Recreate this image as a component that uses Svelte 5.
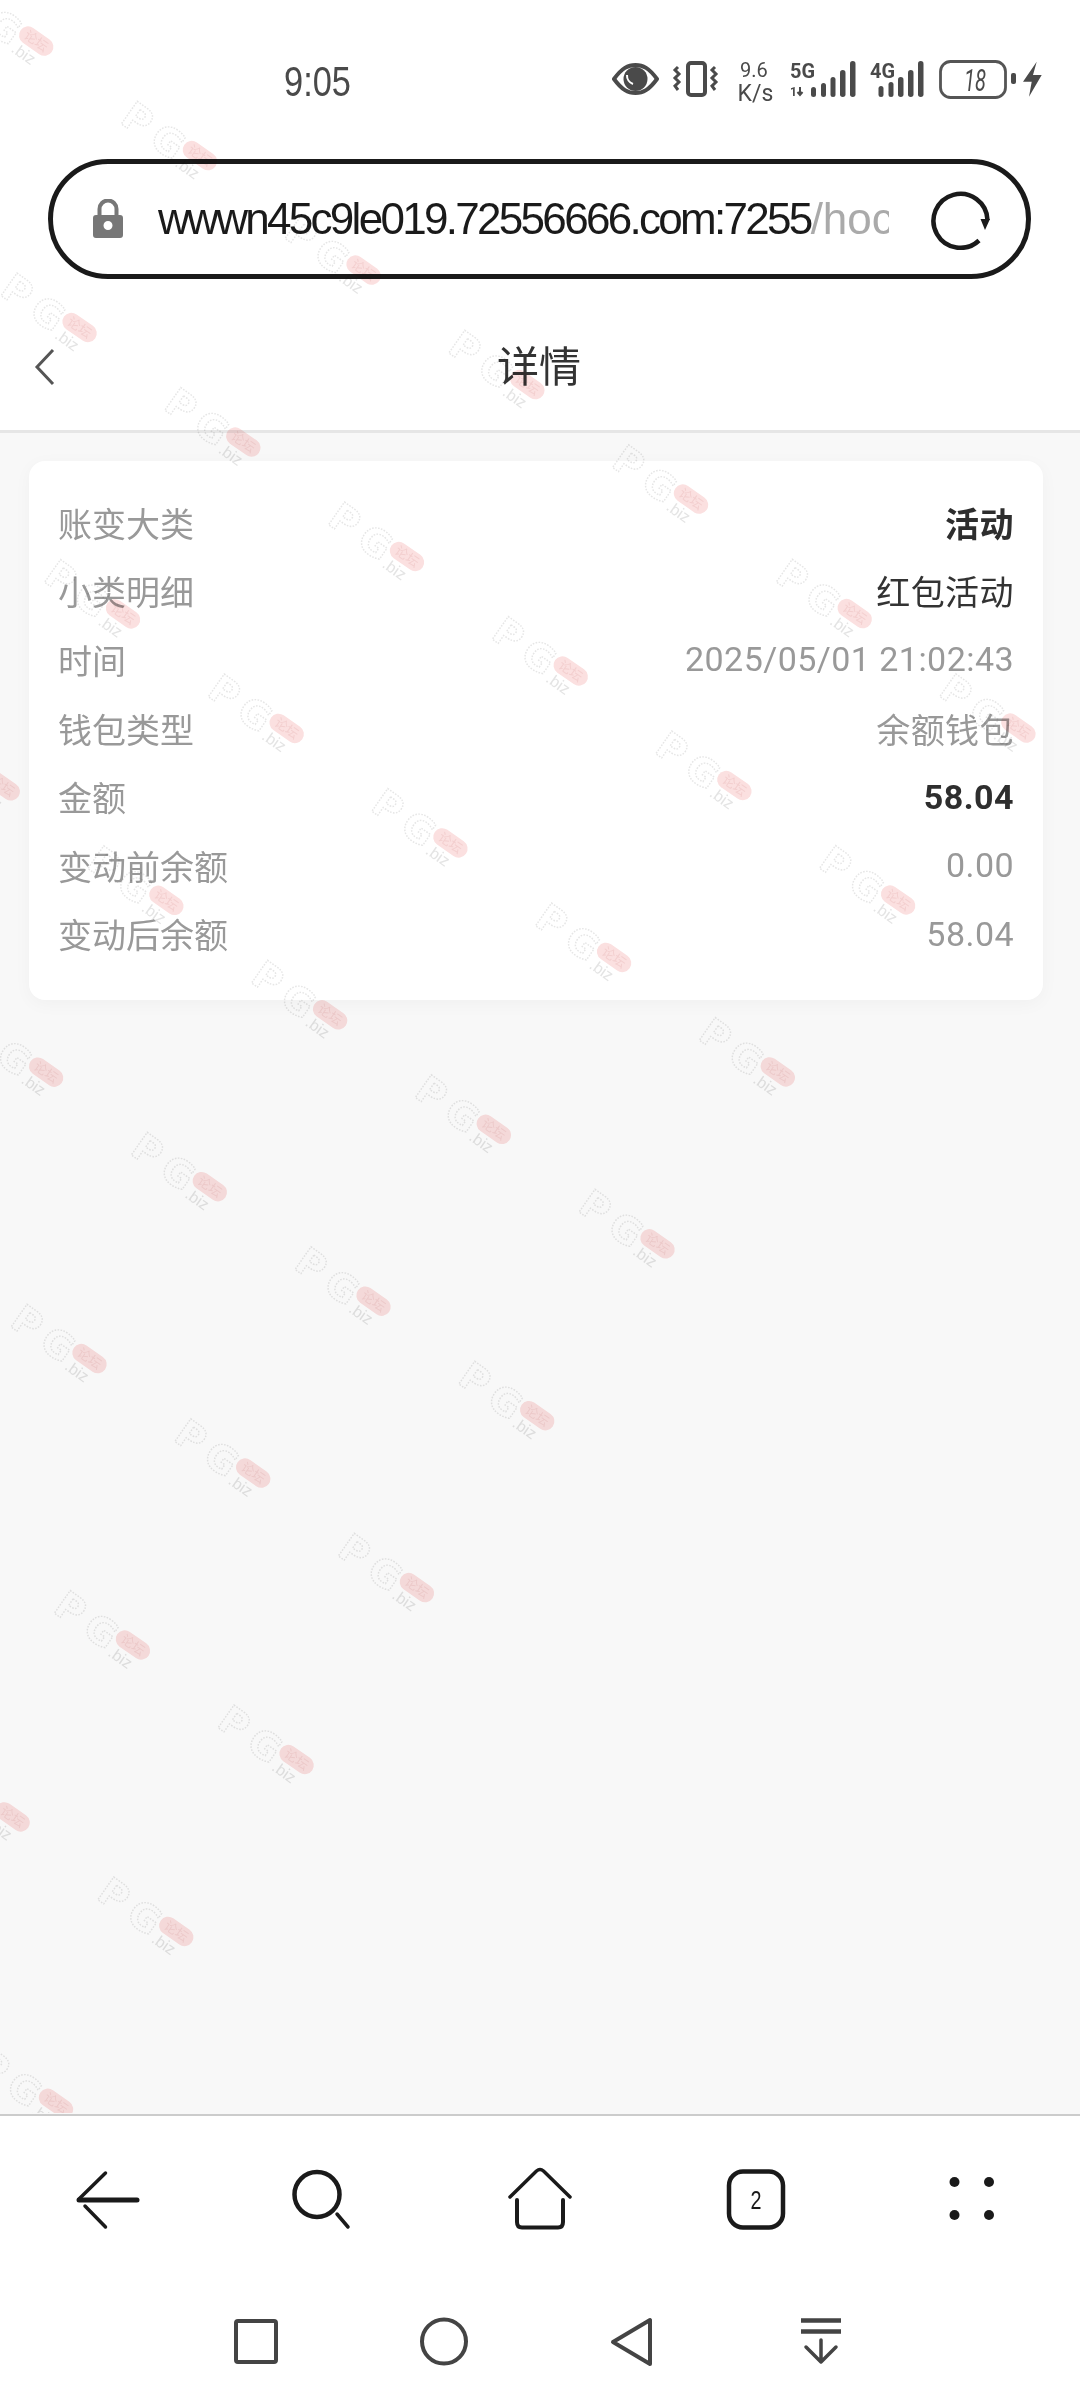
<script>
	const rows = [
		{ label: '账变大类', value: '活动', tone: 'strong' },
		{ label: '小类明细', value: '红包活动', tone: 'dark' },
		{ label: '时间', value: '2025/05/01 21:02:43', tone: '' },
		{ label: '钱包类型', value: '余额钱包', tone: '' },
		{ label: '金额', value: '58.04', tone: 'strong' },
		{ label: '变动前余额', value: '0.00', tone: '' },
		{ label: '变动后余额', value: '58.04', tone: '' }
	];

	// watermark tiles sit on a skewed lattice, measured from the pink pills.
	// the layer is a finite block, so the top right and bottom right stay empty
	const marks = [];
	for (let n = -16; n < 24; n++) {
		for (let m = -16; m <= 1; m++) {
			if (n + m > 3) continue;
			const x = 407 + n * 163.7 + m * 284;
			const y = 556.5 + n * 114.5 - m * 57.4;
			if (x > -40 && x < 1120 && y > -40 && y < 2170) marks.push({ x, y });
		}
	}
</script>

<div class="screen">
	<div class="status">
		<span class="time">9:05</span>
		<svg class="status-icons" width="434" height="50" viewBox="612 56 434 50">
			<path d="M614 79C622 68 628 65 635.5 65S649 68 657 79C649 90 643 93 635.5 93S622 90 614 79Z" fill="none" stroke="#4a4a4a" stroke-width="4" stroke-linejoin="round" />
			<circle cx="635.5" cy="79" r="12" fill="#4a4a4a" />
			<path d="M627 75a9 9 0 0 0 6 9" fill="none" stroke="#fff" stroke-width="2" />
			<rect x="688" y="63" width="17" height="32" rx="3" fill="none" stroke="#4a4a4a" stroke-width="4" />
			<path d="M678 67l-3 3 4 4-4 4 4 4-4 4 3 4M715 67l-3 3 4 4-4 4 4 4-4 4 3 4" fill="none" stroke="#4a4a4a" stroke-width="3" />
			<text class="st" x="754" y="77" text-anchor="middle" font-size="20">9.6</text>
			<text class="st" x="755.5" y="101" text-anchor="middle" font-size="23">K/s</text>
			<text class="st bold" x="790" y="78" font-size="20" textLength="25" lengthAdjust="spacingAndGlyphs">5G</text>
			<text class="st bold" x="790" y="96" font-size="12">1</text>
			<path d="M800 87v8M797.500 92l2.500 3 2.500-3" fill="none" stroke="#4a4a4a" stroke-width="2" />
			<rect x="811" y="87" width="5" height="10" rx="2.500" class="bar" />
			<rect x="821" y="83" width="5" height="14" rx="2.500" class="bar" />
			<rect x="830.500" y="77" width="5" height="20" rx="2.500" class="bar" />
			<rect x="840" y="70" width="5.500" height="27" rx="2.700" class="bar" />
			<rect x="850" y="61" width="5.500" height="36" rx="2.700" class="bar" />
			<text class="st bold" x="870" y="78" font-size="20" textLength="25" lengthAdjust="spacingAndGlyphs">4G</text>
			<rect x="878.500" y="86" width="5" height="11" rx="2.500" class="bar" />
			<rect x="888.500" y="82" width="5" height="15" rx="2.500" class="bar" />
			<rect x="898" y="77" width="5.500" height="20" rx="2.700" class="bar" />
			<rect x="908" y="70" width="5.500" height="27" rx="2.700" class="bar" />
			<rect x="918" y="61" width="5.500" height="36" rx="2.700" class="bar" />
			<rect x="940.500" y="61.500" width="65" height="36" rx="10" fill="none" stroke="#555" stroke-width="2.800" />
			<text class="st" x="975" y="90.500" text-anchor="middle" font-size="31" font-style="italic" textLength="22" lengthAdjust="spacingAndGlyphs">18</text>
			<rect x="1011" y="73" width="5" height="11" rx="2" class="bar" />
			<polygon points="1036.700,61.700 1023,81.700 1031.700,81.700 1029,96.700 1041.700,75 1033,75" fill="#4a4a4a" />
		</svg>
	</div>

	<div class="address">
		<svg class="lock" width="30" height="40" viewBox="93 200 30 40">
			<path d="M99.500 218v-8a8.500 8.500 0 0 1 17 0v8" fill="none" stroke="#777" stroke-width="4" />
			<path d="M96 216h24a3 3 0 0 1 3 3v17a3 3 0 0 1-3 3H96a3 3 0 0 1-3-3v-17a3 3 0 0 1 3-3Zm12 6a4.500 4.500 0 1 0 0 9 4.500 4.500 0 0 0 0-9Z" fill="#777" fill-rule="evenodd" />
		</svg>
		<div class="url"><span>wwwn45c9le019.72556666.com:7255<em>/hoc</em></span></div>
		<svg class="reload" width="62" height="62" viewBox="928 188 62 62">
			<path d="M978 240.500A27 27 0 1 1 986.500 220" fill="none" stroke="#1a1a1a" stroke-width="4.500" />
			<polygon points="979.500,219 989,219 984,230" fill="#1a1a1a" />
		</svg>
	</div>

	<div class="header">
		<svg class="chevron" width="24" height="38" viewBox="0 0 24 38">
			<path d="M20 2 4 19 20 36" fill="none" stroke="#555" stroke-width="3" />
		</svg>
		<h1>详情</h1>
	</div>

	<main class="content">
		<section class="card">
			{#each rows as row}
				<div class="row">
					<span class="label">{row.label}</span>
					<span class="value {row.tone}">{row.value}</span>
				</div>
			{/each}
		</section>
	</main>

	<div class="toolbar">
		<div class="browser-row">
			<svg width="64" height="64" viewBox="0 0 64 64" fill="none" stroke="#1a1a1a" stroke-linecap="round">
				<path d="M3 33H61" stroke-width="5" />
				<path d="M3 32 29.500 6M9 39 29.500 60" stroke-width="3.500" />
			</svg>
			<svg width="64" height="64" viewBox="0 0 64 64" fill="none" stroke="#1a1a1a">
				<circle cx="25" cy="27.500" r="22.500" stroke-width="4.500" />
				<path d="M45 47 56 60" stroke-width="3.500" stroke-linecap="round" />
			</svg>
			<svg width="64" height="64" viewBox="0 0 64 64" fill="none" stroke="#1a1a1a" stroke-linecap="round" stroke-linejoin="round">
				<path d="M2 30 28.500 4Q32 1 35.500 4L62 30" stroke-width="3.500" />
				<path d="M9 33V55Q9 60.500 14 60.500H50Q55 60.500 55 55V33" stroke-width="4" />
			</svg>
			<svg width="64" height="64" viewBox="0 0 64 64" fill="none">
				<rect x="5" y="4.500" width="54" height="56" rx="14" stroke="#1a1a1a" stroke-width="4.500" />
				<text class="tab-count" x="32" y="41.500" text-anchor="middle" textLength="11" lengthAdjust="spacingAndGlyphs">2</text>
			</svg>
			<svg width="64" height="64" viewBox="0 0 64 64" fill="#1a1a1a">
				<circle cx="14.500" cy="15" r="5" />
				<circle cx="49" cy="15" r="5" />
				<circle cx="14.500" cy="48" r="5" />
				<circle cx="49" cy="48" r="5" />
			</svg>
		</div>
		<div class="nav-row">
			<svg width="64" height="64" viewBox="0 0 64 64" fill="none" stroke="#444" stroke-width="4">
				<rect x="12" y="12" width="40" height="41" rx="2" />
			</svg>
			<svg width="64" height="64" viewBox="0 0 64 64" fill="none" stroke="#444" stroke-width="4">
				<circle cx="32" cy="32.500" r="22" />
			</svg>
			<svg width="64" height="64" viewBox="0 0 64 64" fill="none" stroke="#444" stroke-width="4" stroke-linejoin="round">
				<path d="M50 11V55L13 33Z" />
			</svg>
			<svg width="64" height="64" viewBox="0 0 64 64" fill="none" stroke="#444">
				<path d="M13 11.500H53M13 22.500H53" stroke-width="4.500" />
				<path d="M33 31V53M18 38 33 53 48 38" stroke-width="3.500" stroke-linecap="round" stroke-linejoin="round" />
			</svg>
		</div>
	</div>

	<svg class="watermark" width="1080" height="2113" viewBox="0 0 1080 2113">
		<defs>
			<g id="wm">
				<text class="wm-letter" x="-72" y="19" text-anchor="middle">P</text>
				<text class="wm-letter" x="-34" y="20" text-anchor="middle">G</text>
				<rect x="-19" y="-9" width="38" height="18" rx="9" fill="#fbe0e0" />
				<text class="wm-pill" x="0" y="4.500" text-anchor="middle">论坛</text>
				<text class="wm-biz" x="-3" y="23" text-anchor="middle">.biz</text>
			</g>
		</defs>
		{#each marks as m}
			<use href="#wm" transform="translate({m.x} {m.y}) rotate(35)" />
		{/each}
	</svg>
</div>

<style>
	:global(body) {
		margin: 0;
		background: #fff;
	}
	.screen {
		position: relative;
		width: 1080px;
		height: 2400px;
		overflow: hidden;
		display: flex;
		flex-direction: column;
		background: #fff;
		font-family: Roboto, 'Noto Sans CJK SC', sans-serif;
	}
	.status {
		height: 159px;
		box-sizing: border-box;
		padding: 56px 34px 0 284px;
		display: flex;
		justify-content: space-between;
		align-items: flex-start;
	}
	.time {
		font-family: 'Liberation Sans', sans-serif;
		font-size: 43px;
		line-height: 50px;
		color: #4a4a4a;
		display: inline-block;
		transform: scaleX(0.8);
		transform-origin: left center;
	}
	.st {
		font-family: Roboto, sans-serif;
		fill: #4a4a4a;
	}
	.st.bold {
		font-weight: 700;
	}
	.bar {
		fill: #4a4a4a;
	}
	.address {
		margin: 0 49px 0 48px;
		height: 120px;
		box-sizing: border-box;
		border: 5px solid #1a1a1a;
		border-radius: 60px;
		padding-left: 40px;
		display: flex;
		align-items: center;
	}
	.lock {
		flex: none;
	}
	.url {
		width: 731px;
		margin-left: 35px;
		overflow: hidden;
		white-space: nowrap;
		font-family: 'Liberation Sans', sans-serif;
		font-size: 44px;
		line-height: 60px;
		letter-spacing: -2.7px;
		color: #1a1a1a;
	}
	.url em {
		font-style: normal;
		color: #aaa;
		letter-spacing: 0;
	}
	.reload {
		flex: none;
		margin-left: 40px;
	}
	.header {
		position: relative;
		height: 151px;
		box-sizing: content-box;
		display: flex;
		align-items: center;
		justify-content: center;
		border-bottom: 3px solid #e6e6e6;
	}
	.chevron {
		position: absolute;
		left: 33px;
		top: 69px;
	}
	h1 {
		margin: 18px 0 0 -2px;
		font-size: 42px;
		font-weight: 400;
		color: #333;
	}
	.content {
		flex: 1;
		background: #f8f8f8;
		padding: 28px 37px 0 29px;
		min-height: 0;
	}
	.card {
		width: 1014px;
		height: 539px;
		box-sizing: border-box;
		padding: 27px 29px 0;
		background: #fff;
		border-radius: 16px;
		box-shadow: 0 4px 18px rgba(0, 0, 0, 0.035);
	}
	.row {
		height: 68.6px;
		display: flex;
		justify-content: space-between;
		align-items: center;
		font-size: 34px;
	}
	.label,
	.value {
		color: #999;
	}
	.value {
		letter-spacing: 0.45px;
	}
	.value.dark {
		color: #333;
	}
	.value.strong {
		color: #2e2e2e;
		font-weight: 700;
	}
	.toolbar {
		flex: none;
		height: 284px;
		border-top: 2px solid #ccc;
		background: #fff;
		position: relative;
		z-index: 2;
	}
	.browser-row {
		height: 165px;
		display: grid;
		grid-template-columns: repeat(5, 216px);
		justify-items: center;
		align-items: center;
	}
	.nav-row {
		height: 119px;
		display: grid;
		grid-template-columns: repeat(4, 188px);
		justify-content: center;
		justify-items: center;
		align-items: center;
		padding-right: 4px;
	}
	.tab-count {
		font-family: 'Liberation Sans', sans-serif;
		font-size: 26px;
		fill: #1a1a1a;
	}
	.watermark {
		position: absolute;
		left: 0;
		top: 0;
		pointer-events: none;
		z-index: 1;
		mix-blend-mode: multiply;
	}
	.wm-letter {
		font-family: 'DejaVu Sans', sans-serif;
		font-size: 38px;
		font-weight: 700;
		fill: none;
		stroke: #e6e6e6;
		stroke-width: 1.4;
		stroke-dasharray: 1.5 1.5;
	}
	.wm-pill {
		font-family: 'Noto Sans CJK SC', sans-serif;
		font-size: 13px;
		fill: #f3cfcf;
	}
	.wm-biz {
		font-family: 'Liberation Sans', sans-serif;
		font-size: 16px;
		fill: #e4e4e4;
	}
</style>
